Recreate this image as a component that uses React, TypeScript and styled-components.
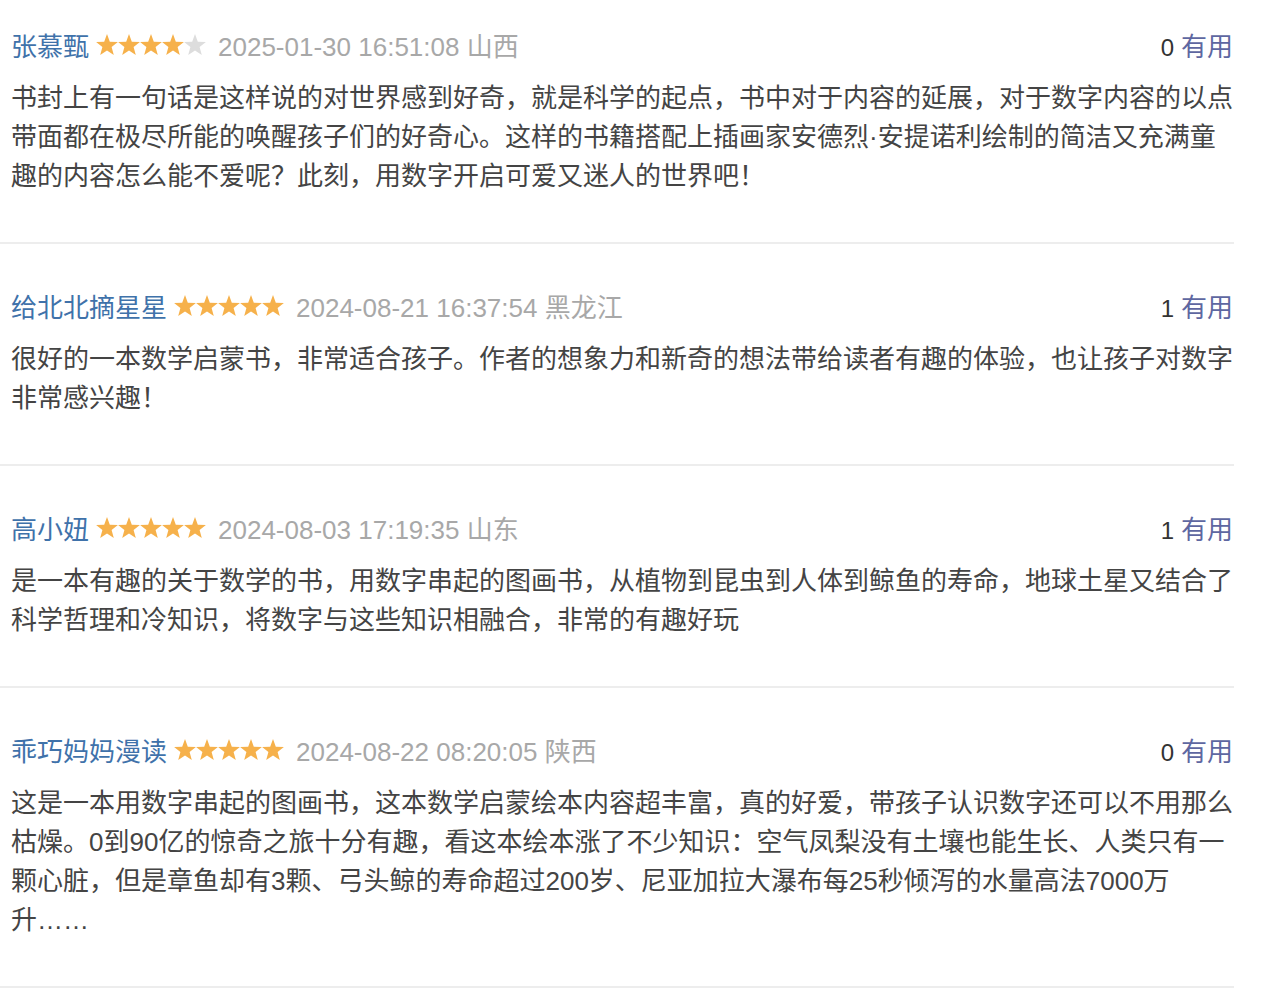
import React from "react";
import styled, {createGlobalStyle} from "styled-components";

type Review = {
    name: string
    stars: number
    time: string
    region: string
    useful: number
    text: string
}

const reviews: Review[] = [
    {
        name: "张慕甄",
        stars: 4,
        time: "2025-01-30 16:51:08",
        region: "山西",
        useful: 0,
        text: "书封上有一句话是这样说的对世界感到好奇，就是科学的起点，书中对于内容的延展，对于数字内容的以点带面都在极尽所能的唤醒孩子们的好奇心。这样的书籍搭配上插画家安德烈·安提诺利绘制的简洁又充满童趣的内容怎么能不爱呢？此刻，用数字开启可爱又迷人的世界吧！",
    },
    {
        name: "给北北摘星星",
        stars: 5,
        time: "2024-08-21 16:37:54",
        region: "黑龙江",
        useful: 1,
        text: "很好的一本数学启蒙书，非常适合孩子。作者的想象力和新奇的想法带给读者有趣的体验，也让孩子对数字非常感兴趣！",
    },
    {
        name: "高小妞",
        stars: 5,
        time: "2024-08-03 17:19:35",
        region: "山东",
        useful: 1,
        text: "是一本有趣的关于数学的书，用数字串起的图画书，从植物到昆虫到人体到鲸鱼的寿命，地球土星又结合了科学哲理和冷知识，将数字与这些知识相融合，非常的有趣好玩",
    },
    {
        name: "乖巧妈妈漫读",
        stars: 5,
        time: "2024-08-22 08:20:05",
        region: "陕西",
        useful: 0,
        text: "这是一本用数字串起的图画书，这本数学启蒙绘本内容超丰富，真的好爱，带孩子认识数字还可以不用那么枯燥。0到90亿的惊奇之旅十分有趣，看这本绘本涨了不少知识：空气凤梨没有土壤也能生长、人类只有一颗心脏，但是章鱼却有3颗、弓头鲸的寿命超过200岁、尼亚加拉大瀑布每25秒倾泻的水量高法7000万升……",
    },
];

const GlobalStyle = createGlobalStyle`
    body {
        margin: 0;
        background: #fff;
        font-family: "Liberation Sans", "Noto Sans CJK SC", sans-serif;
    }
`;

const List = styled.div`
    width: 1234px;`
;
const Item = styled.div`
    padding: 42px 1px 46px 11px;
    border-bottom: 2px solid #ededed;
    &:first-child {
        padding-top: 25px;
    }`
;
const Header = styled.div`
    display: flex;
    align-items: center;
    justify-content: space-between;
    height: 39px;
    margin-bottom: 15px;`
;
const Meta = styled.div`
    display: flex;
    align-items: center;`
;
const Name = styled.span`
    font-size: 26px;
    color: #3f72aa;`
;
const Stars = styled.span`
    display: flex;
    margin: 0 12px 0 7px;`
;
const Time = styled.span`
    font-size: 26px;
    color: #a8a8a8;`
;
const Useful = styled.div`
    font-size: 24px;
    color: #333;`
;
const UsefulLabel = styled.span`
    font-size: 26px;
    color: #5e67a1;
    margin-left: 7px;`
;
const Body = styled.p`
    margin: 0;
    font-size: 26px;
    line-height: 39px;
    color: #444;`
;

const Star = ({on}: {on: boolean}) => (
    <svg width="22" height="22" viewBox="0 0 22 22">
        <polygon
            points="11,0.1 13.8,7.7 21.9,8.1 15.6,13.1 17.8,20.9 11,16.4 4.2,20.9 6.4,13.1 0.1,8.1 8.2,7.7"
            fill={on ? "#f6b14b" : "#dddddd"}
        />
    </svg>
);

export default function App() {
    return (
        <>
            <GlobalStyle/>
            <List>
                {reviews.map(r => (
                    <Item key={r.name}>
                        <Header>
                            <Meta>
                                <Name>{r.name}</Name>
                                <Stars>
                                    {[0, 1, 2, 3, 4].map(i => <Star key={i} on={i < r.stars}/>)}
                                </Stars>
                                <Time>{r.time} {r.region}</Time>
                            </Meta>
                            <Useful>
                                {r.useful}
                                <UsefulLabel>有用</UsefulLabel>
                            </Useful>
                        </Header>
                        <Body>{r.text}</Body>
                    </Item>
                ))}
            </List>
        </>
    );
}
